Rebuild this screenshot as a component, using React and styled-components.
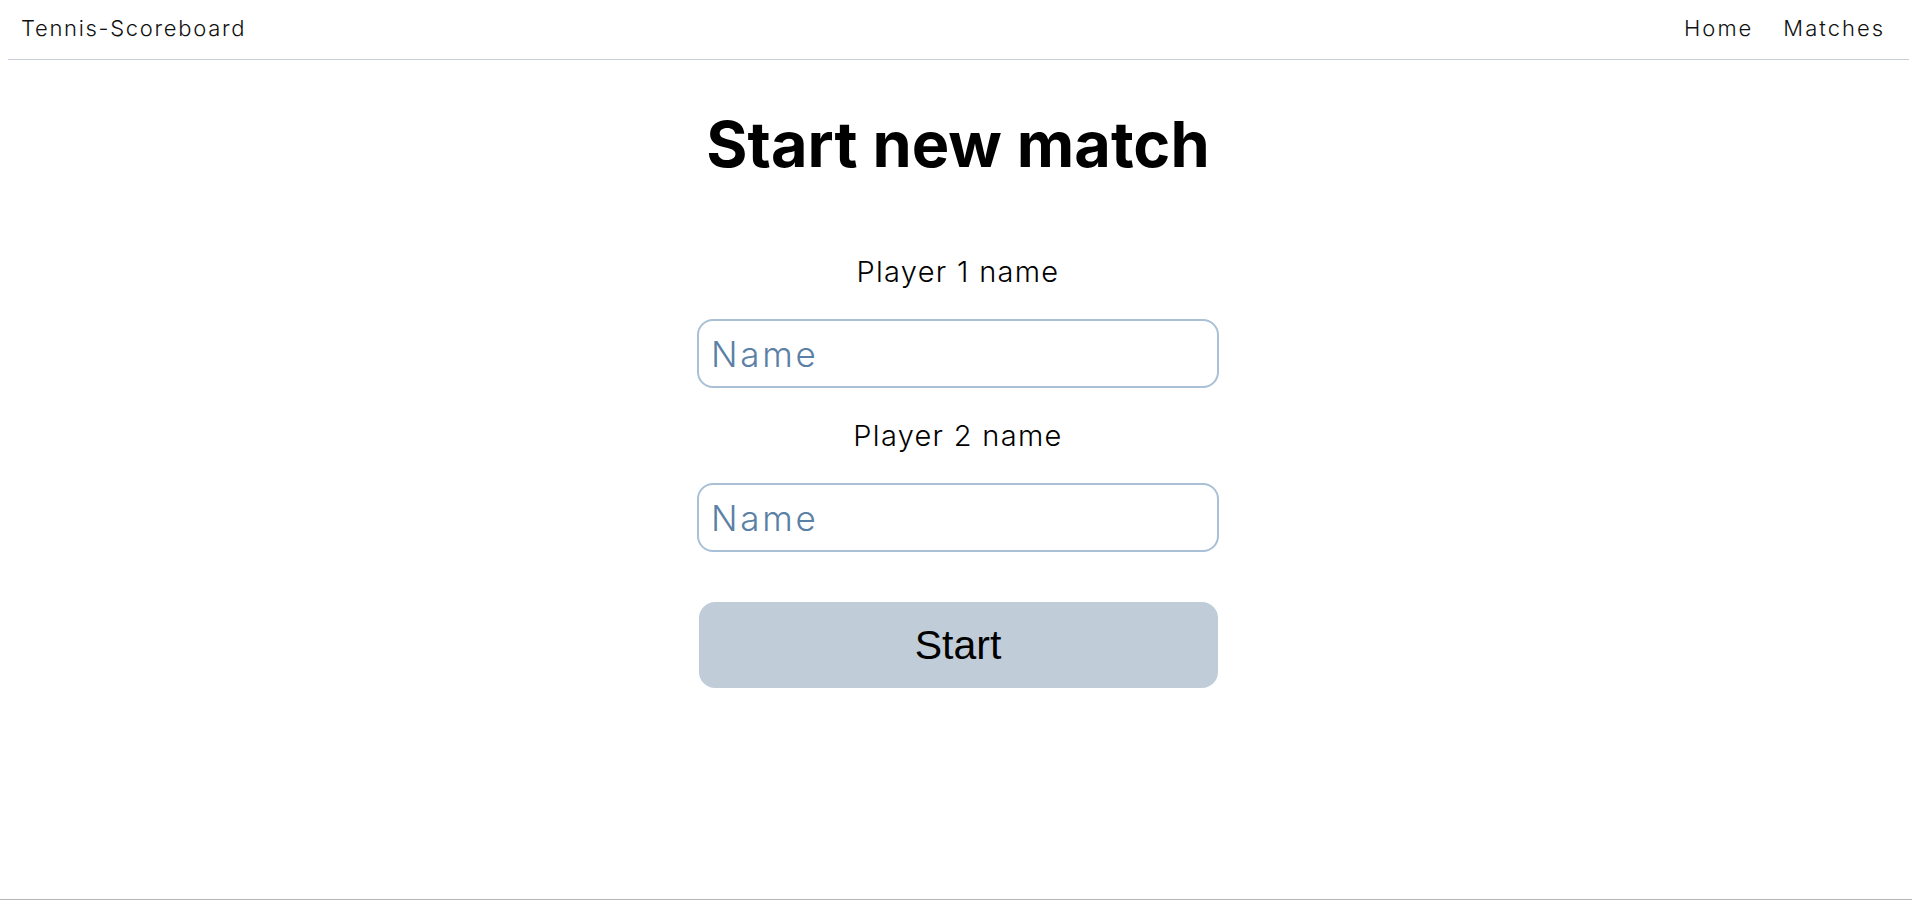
import React from "react";
import styled, { createGlobalStyle } from "styled-components";

const GlobalStyle = createGlobalStyle`
  html, body {
    margin: 0;
    padding: 0;
    background: #ffffff;
  }
  body {
    font-family: Inter, "Noto Sans", sans-serif;
    color: #111;
  }
  * {
    box-sizing: border-box;
  }
`;

const Page = styled.div`
  display: flex;
  flex-direction: column;
  min-height: 100vh;
`;

const Header = styled.header`
  display: flex;
  justify-content: space-between;
  align-items: center;
  margin: 8px 3px 0 8px;
  padding: 7px 24px 18px 13px;
  border-bottom: 1px solid #c7d0da;
`;

const Brand = styled.a`
  font-size: 22px;
  line-height: 26px;
  font-weight: 300;
  letter-spacing: 1.7px;
  color: #111;
  text-decoration: none;
`;

const Nav = styled.nav`
  display: flex;
  gap: 30px;
`;

const NavLink = styled.a`
  font-size: 22px;
  line-height: 26px;
  font-weight: 300;
  letter-spacing: 2px;
  color: #111;
  text-decoration: none;
  cursor: pointer;
`;

const Main = styled.main`
  flex: 1;
  display: flex;
  flex-direction: column;
  align-items: center;
  padding-left: 4px;
`;

const Title = styled.h1`
  margin: 46px 0 0;
  font-size: 63px;
  line-height: 76px;
  font-weight: 700;
  letter-spacing: 0;
  color: #000;
`;

const Form = styled.form`
  display: flex;
  flex-direction: column;
  align-items: center;
  width: 522px;
  margin-top: 72px;
`;

const Label = styled.label`
  font-size: 29px;
  line-height: 35px;
  font-weight: 300;
  letter-spacing: 1.3px;
  color: #000;
  margin-top: ${(p) => (p.$first ? "0" : "30px")};
`;

const Input = styled.input`
  width: 100%;
  height: 69px;
  margin-top: 30px;
  padding: 0 12px;
  border: 2px solid #a9c0d7;
  border-radius: 16px;
  font-family: Inter, "Noto Sans", sans-serif;
  font-size: 35px;
  font-weight: 300;
  letter-spacing: 2.7px;
  color: #1d3a57;
  outline: none;
  background: #fff;

  &::placeholder {
    color: #5b80a5;
    opacity: 1;
  }
`;

const StartButton = styled.button`
  width: 519px;
  height: 86px;
  margin-top: 50px;
  border: none;
  border-radius: 16px;
  background: #c0cdd9;
  color: #000;
  font-family: "Liberation Sans", Arial, sans-serif;
  font-size: 41px;
  cursor: pointer;
`;

const Footer = styled.footer`
  height: 1px;
  border-top: 1px solid #b5b5b5;
`;

export default function App() {
  return (
    <Page>
      <GlobalStyle />
      <Header>
        <Brand href="#">Tennis-Scoreboard</Brand>
        <Nav>
          <NavLink>Home</NavLink>
          <NavLink>Matches</NavLink>
        </Nav>
      </Header>
      <Main>
        <Title>Start new match</Title>
        <Form onSubmit={(e) => e.preventDefault()}>
          <Label $first htmlFor="player1">Player 1 name</Label>
          <Input id="player1" placeholder="Name" />
          <Label htmlFor="player2">Player 2 name</Label>
          <Input id="player2" placeholder="Name" />
          <StartButton type="submit">Start</StartButton>
        </Form>
      </Main>
      <Footer />
    </Page>
  );
}
